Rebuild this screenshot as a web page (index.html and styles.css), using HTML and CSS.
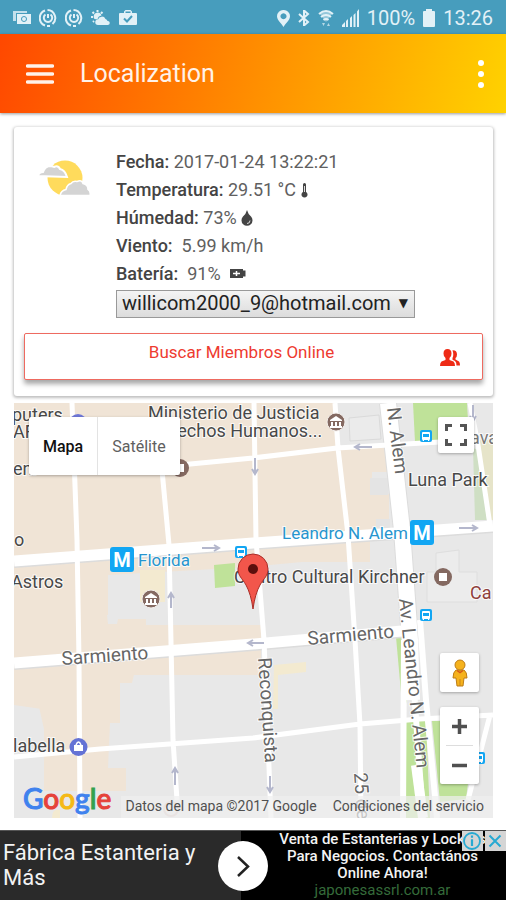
FILE: index.html
```html
<!DOCTYPE html>
<html lang="es">
<head>
<meta charset="utf-8">
<meta name="viewport" content="width=device-width, initial-scale=1">
<title>Localization</title>
<link rel="stylesheet" href="styles.css">
</head>
<body>
<div class="status">
  <div class="status-group">
    <svg width="18" height="16" viewBox="0 0 18 16"><path d="M0 1h14v2H3v8H0z" opacity=".8"/><path fill-rule="evenodd" d="M4 4h14v10H4zM11 6a3 3 0 1 0 .01 0z"/><circle cx="11" cy="9" r="2"/></svg>
    <svg width="18" height="18" viewBox="0 0 18 18"><g class="line"><path d="M6 1.500A8 8 0 0 0 6 16.500M8.500 1a8 8 0 0 1 5 14M8 17h3"/><path d="M6.500 5.500a4.200 4.200 0 1 0 5 0M9 5v4"/></g></svg>
    <svg width="18" height="18" viewBox="0 0 18 18"><g class="line"><path d="M6 1.500A8 8 0 0 0 6 16.500M8.500 1a8 8 0 0 1 5 14M8 17h3"/><path d="M6.500 5.500a4.200 4.200 0 1 0 5 0M9 5v4"/></g></svg>
    <svg width="20" height="16" viewBox="0 0 20 16"><g class="line"><path d="M6.500 0v2M1.500 2l1.500 1.500M11.500 2L10 3.500M0 7h2M2 12l1-1"/></g><path d="M3.500 9A4 4 0 1 1 10.500 5.500Q7 6 6.500 9.500zM7 15a2.700 2.700 0 0 1 0-5.500A4 4 0 0 1 14.500 9a3 3 0 0 1 2 2A2 2 0 0 1 17 15z"/></svg>
    <svg width="18" height="18" viewBox="0 0 18 18"><path d="M1 4h4V2.500L6.500 1h5L13 2.500V4h4q1 0 1 1v10q0 1-1 1H1q-1 0-1-1V5q0-1 1-1zM6.500 4h5V2.500h-5z" fill-rule="evenodd"/><path d="M5 9.500l3 3 5-5.500" fill="none" stroke="#479dbd" stroke-width="2"/></svg>
  </div>
  <div class="status-group">
    <svg width="13" height="17" viewBox="0 0 13 17"><path fill-rule="evenodd" d="M6.500 0A6.300 6.300 0 0 1 13 6.300C13 10 9 13 6.500 17 4 13 0 10 0 6.300A6.300 6.300 0 0 1 6.500 0zM6.500 3.300a3 3 0 1 0 .01 0z"/></svg>
    <svg width="12" height="16" viewBox="0 0 12 16"><path class="line" d="M1 4l9 8-4 3.500V.5L10 4l-9 8"/></svg>
    <svg width="16" height="18" viewBox="0 0 16 18"><g class="line"><path d="M1 5q7-6 14 0M3 8q5-4 10 0M5.500 11q2.500-2 5 0"/></g><path d="M8 13L2 5q6-4 12 0z" opacity=".5"/><path d="M4 14h3l-1.500 3zM9 17h3l-1.500-3z" opacity=".7"/></svg>
    <svg width="17" height="18" viewBox="0 0 17 18"><path d="M0 18v-2l3-3v5zM4 12l2-2v8H4zM8 9l2-2v11H8zM11.500 6l2-2v14h-2zM15 2.500L17 0v18h-2z"/></svg>
    <span>100%</span>
    <svg width="12" height="18" viewBox="0 0 12 18"><path d="M3 0h6v2h2q1 0 1 1v14q0 1-1 1H1q-1 0-1-1V3q0-1 1-1h2z"/></svg>
    <span>13:26</span>
  </div>
</div>

<header class="bar">
  <button class="menu" type="button" aria-label="Menú"><svg width="28" height="20" viewBox="0 0 28 20"><path d="M1.500 2h25M1.500 10h25M1.500 18h25" stroke="#fff2ea" stroke-width="3.400" stroke-linecap="round"/></svg></button>
  <h1>Localization</h1>
  <button type="button" aria-label="Opciones"><svg width="8" height="30" viewBox="0 0 8 30" fill="#fff"><circle cx="4" cy="4" r="3"/><circle cx="4" cy="15" r="3"/><circle cx="4" cy="26" r="3"/></svg></button>
</header>

<main>
  <section class="card">
    <div class="weather">
      <svg class="weather-icon" width="52" height="36" viewBox="0 0 52 36"><circle cx="27" cy="18" r="17.500" fill="#ffdb5c"/><path d="M0 16q1-4 5-4 2-6 8-6l3 1q4-2 6 2 5 1 7 8z" fill="#d4d4d4" stroke="#fff" stroke-width="2"/><path d="M22 35.500q1-5 6-6 1-5 5-6 2-3 6-2 5-2 6 2 5 1 5 6 3 2 2 6z" fill="#d4d4d4" stroke="#fff" stroke-width="1.500"/></svg>
      <div class="facts">
        <p><b>Fecha:</b> 2017-01-24 13:22:21</p>
        <p><b>Temperatura:</b> 29.51 °C <svg width="7" height="15" viewBox="0 0 7 15"><path d="M2 1.500a1.500 1.500 0 0 1 3 0V9a3 3 0 1 1-3 0z"/><path d="M3.500 3v6" stroke="#ddd"/></svg></p>
        <p><b>Húmedad:</b> 73% <svg width="12" height="16" viewBox="0 0 12 16"><path d="M6 0q1 4 4 6.500a5.500 5.500 0 1 1-8 0Q5 4 6 0z"/><path d="M6 13.500q3 0 3-3" stroke="#ddd" fill="none"/></svg></p>
        <p><b>Viento:</b>&nbsp; 5.99 km/h</p>
        <p><b>Batería:</b>&nbsp; 91% &nbsp;<svg class="battery" width="16" height="9" viewBox="0 0 16 9"><path d="M0 0h13v1.500h2.500v6H13V9H0z"/><path d="M3 4.500h7M6.500 2v5" stroke="#fff" stroke-width="1.500"/></svg></p>
        <div class="select-box">
          <select aria-label="Cuenta"><option>willicom2000_9@hotmail.com</option></select>
        </div>
      </div>
    </div>
    <button class="search" type="button"><span>Buscar Miembros Online</span>
      <svg width="20" height="17" viewBox="0 0 20 17" fill="#ee2b16"><path d="M3.500 4.500Q3.500 0 7.500 0t4 4.500Q11.500 8 9.500 9v2l4 1.500q1.500 1 1.500 4.500H0q0-3.500 1.500-4.500l4-1.500V9Q3.500 8 3.500 4.500zM12.500 1.200Q17 1 17 5.500q0 2.500-1.500 3.500v1.500l3.500 2q1 1 1 4h-3.500q0-3.500-1.500-4.500l-2.500-1.200V9Q14 6 12.500 1.200z"/></svg>
    </button>
  </section>

  <section class="map" aria-label="Mapa">
    <svg class="map-canvas" viewBox="14 403 479 415" preserveAspectRatio="xMidYMid slice">
      <rect x="14" y="403" width="479" height="415" fill="#e8e8e8"/>
      <g fill="#f0e4d6">
        <path d="M14 403H334l5 45h48v24h-15v22h17v27l-19 13v28h-68l-52 5-142 8v40h-1l1 9h9l1-5h28v6h115v50H134l-2 8h-12v40h-10l-2 45h18v23H44v-62l-7-31h15V718H42v-9L14 705z"/>
      </g>
      <path d="M370 478h18v17h-18zM376 519h14v14h-14z" fill="#e4e4e4"/>
      <path d="M349 418l30-3 2 24-31 2z" fill="#ebebeb" stroke="#dadada"/>
      <path d="M436 553l23-3v22h18v30h-50v-30h9z" fill="#ececec" stroke="#dedede"/>
      <path d="M140 570h25v32h-25zM274 665l32-3v10l-28 3v34h-5zM52 818q0-10 8-8v8z" fill="#f3ead0"/>
      <path d="M479 440h14v80h-5z" fill="#e6e4c9"/>
      <g fill="#bfe299">
        <path d="M413 403h54l2 36-54 3z"/><path d="M214 565l21-2v23l-20 2z"/>
        <path d="M396 637l5-1 6 64-4 15z"/><path d="M419 629l4-1 6 85-5-11z"/>
        <path d="M405 721h21l4 97h-26z"/><path d="M432 721h44l-10 78-26 3z"/>
        <path d="M473 448l5 2 9 70h-12z" fill="#cfdfc4"/>
      </g>
      <g class="road-edge">
        <path d="M14 562L253 544 493 527M14 664L253 645 402 632" stroke-width="12"/>
        <path d="M388 403L402 530 410 640" stroke-width="18"/>
      </g>
      <g class="road">
        <path d="M14 561L253 543 493 526M14 663L253 644 402 631" stroke-width="11"/>
        <path d="M388 403L402 530 410 640 412 700" stroke-width="16"/>
        <path d="M404 640L403 818M420 620L426 700 437 818M414 690L423 818" stroke-width="6"/>
        <path d="M416 765L423 818" stroke-width="10"/>
        <path d="M72 403L77 540 79 660 80 818M180 465L253 458 337 448 440 442M162 470L169 545 173 740 177 800M254 403L256 540 264 640 271 818M335 403L338 448 348 535 355 640 360 725 361 818M14 757L100 749 253 738 360 724 420 719 493 715M470 403L478 445 490 525M490 715L468 800" stroke-width="5"/>
      </g>
      <g class="arrow">
        <path d="M202 548h17m-5-3l5 3-5 3M459 528h18m-5-3l5 3-5 3M372 447h-17m5-3l-5 3 5 3M255 458v16m-3-5l3 5 3-5M171 608v-15m-3 5l3-5 3 5M264 643h-16m5-3l-5 3 5 3M175 785v-17m-3 5l3-5 3 5M270 776v16m-3-5l3 5 3-5M473 405v16m-3-5l3 5 3-5"/>
      </g>
      <g class="label">
        <text x="12" y="421">puters</text><text x="13" y="438">AR</text><text x="13" y="475">enl</text>
        <text x="148" y="419">Ministerio de Justicia</text><text x="150" y="437">Derechos Humanos...</text>
        <text x="14" y="546">o</text><text x="11" y="588">Astros</text><text x="13" y="752">labella</text>
        <text x="408" y="486">Luna Park</text><text x="234" y="583">Centro Cultural Kirchner</text>
        <text x="470" y="444" class="faint">ava</text>
        <text x="470" y="599" class="food">Ca</text>
      </g>
      <g class="label transit"><text x="138" y="566">Florida</text><text x="282" y="539">Leandro N. Alem</text></g>
      <g class="label street">
        <text transform="translate(62 665) rotate(-4)">Sarmiento</text>
        <text transform="translate(308 645) rotate(-5)">Sarmiento</text>
        <text transform="translate(258 658) rotate(86)">Reconquista</text>
        <text transform="translate(387 408) rotate(83)">N. Alem</text>
        <text transform="translate(399 599) rotate(84)">Av. Leandro N. Alem</text>
        <text transform="translate(354 773) rotate(86)">25 de</text>
      </g>
      <g id="metro"><rect x="110" y="547" width="24" height="25" rx="3" fill="#12a6f3"/><text x="122" y="567" class="metro">M</text></g>
      <use href="#metro" x="300" y="-27"/>
      <g id="bus"><rect x="235" y="546" width="12" height="12" rx="2" fill="#12a6f3"/><path fill="#fff" d="M238 548h6q1 0 1 1v6l-1 2h-1v-1h-4v1h-1l-1-2v-6q0-1 1-1zm0 2v3h6v-3z" fill-rule="evenodd"/></g>
      <use href="#bus" x="185" y="-116"/><use href="#bus" x="185" y="63"/><use href="#bus" x="238" y="206"/>
      <g id="museum"><circle cx="151" cy="599" r="9" fill="#846961" stroke="#f3eeea"/><path d="M145 597l6-4 6 4v1h-12zM146 599h2v4h-2zM150 599h2v4h-2zM154 599h2v4h-2zM145 603h12v2h-12z" fill="#fff"/></g>
      <use href="#museum" x="185" y="-177"/>
      <circle cx="180" cy="468" r="9" fill="#846961"/><path d="M176 464h8v8h-8z" fill="#fff"/>
      <circle cx="443" cy="577" r="9" fill="#846961"/><path d="M439 573h8v8h-8z" fill="#fff"/>
      <circle cx="78" cy="423" r="9" fill="#6f78d8"/>
      <circle cx="78.500" cy="747" r="9" fill="#6472d5"/><path d="M74 745h9v6h-9z" fill="#fff"/><path d="M76 745q2.500-6 5 0" fill="none" stroke="#fff" stroke-width="1.500"/><circle cx="171" cy="809" r="7" fill="none" stroke="#d9c6c2" stroke-width="2"/>
      <path d="M253 609q-2-15-7-24c-4-7-8-9-8-16a15 15 0 0 1 30 0c0 7-4 9-8 16q-5 9-7 24z" fill="#f2564b" stroke="#a92e28"/><circle cx="253" cy="569" r="5" fill="#5b0f0d"/>
    </svg>
    <div class="map-types"><button type="button" class="active">Mapa</button><button type="button">Satélite</button></div>
    <button class="map-button fullscreen" type="button" aria-label="Pantalla completa"><svg width="22" height="22" viewBox="0 0 22 22"><path d="M1.500 7V1.500H7M15 1.500h5.500V7M20.500 15v5.500H15M7 20.500H1.500V15" fill="none" stroke="#555" stroke-width="3"/></svg></button>
    <div class="map-side">
      <button class="map-button pegman" type="button" aria-label="Street View"><svg width="16" height="28" viewBox="0 0 16 28"><path d="M4 11q-3 2-3 8h3l1 8h6l1-8h3q0-6-3-8z" fill="#f5b21d" stroke="#bd7d17"/><circle cx="8" cy="6" r="5" fill="#f5b21d" stroke="#bd7d17"/><path d="M5 11.500l3 2 3-2" fill="none" stroke="#d4561a" stroke-width="1.500"/><path d="M8 20v7" stroke="#c9851b"/></svg></button>
      <div class="zoom">
        <button type="button" aria-label="Acercar"><svg width="15" height="15" viewBox="0 0 15 15"><path d="M0 7.500h15M7.500 0v15" stroke="#505050" stroke-width="3.500"/></svg></button>
        <button type="button" aria-label="Alejar"><svg width="15" height="15" viewBox="0 0 15 15"><path d="M0 7.500h15" stroke="#505050" stroke-width="3.500"/></svg></button>
      </div>
    </div>
    <div class="google" aria-label="Google"><span class="g-blue">G</span><span class="g-red">o</span><span class="g-yellow">o</span><span class="g-blue">g</span><span class="g-green">l</span><span class="g-red">e</span></div>
    <div class="credits"><span>Datos del mapa ©2017 Google</span><a href="#terms">Condiciones del servicio</a></div>
  </section>
</main>

<aside class="ad">
  <div class="ad-title">Fábrica Estanteria y Más</div>
  <div class="ad-copy"><p>Venta de Estanterias y Lockers</p><p>Para Negocios. Contactános</p><p>Online Ahora!</p><a href="#ad">japonesassrl.com.ar</a></div>
  <button class="ad-go" type="button" aria-label="Abrir anuncio"><svg width="50" height="50" viewBox="0 0 50 50"><path d="M20 16l10 9.500L20 35" fill="none" stroke="#222" stroke-width="2.500"/></svg></button>
  <div class="ad-tools">
    <button type="button" aria-label="Información"><svg width="20" height="20" viewBox="0 0 20 20"><circle cx="10" cy="10" r="8" fill="none" stroke="#27a9d2" stroke-width="1.800"/><path d="M10 4.500v2.300M10 8.300V15" stroke="#27a9d2" stroke-width="2.200"/></svg></button>
    <button type="button" aria-label="Cerrar"><svg width="20" height="20" viewBox="0 0 20 20"><path d="M4.500 4.500l11 11M15.500 4.500l-11 11" stroke="#27a9d2" stroke-width="2"/></svg></button>
  </div>
</aside>
</body>
</html>
```

FILE: styles.css
```css
* { box-sizing: border-box; }
body { margin: 0; min-height: 100vh; display: flex; flex-direction: column; background: #fff; color: #4a4a4a; font-family: Roboto, "Liberation Sans", sans-serif; }
button { font: inherit; color: inherit; border: 0; padding: 0; background: none; cursor: pointer; }
p, h1 { margin: 0; }
svg { display: block; flex: none; }

.status { height: 34px; padding: 2px 13px 0; display: flex; align-items: center; justify-content: space-between; background: #479dbd; color: #e2f1f7; font-size: 20px; }
.status svg { fill: #e2f1f7; }
.status .line { fill: none; stroke: #e2f1f7; stroke-width: 2; }
.status-group { display: flex; align-items: center; gap: 8px; }

.bar { height: 79px; padding: 0 21px 0 26px; display: flex; align-items: center; background: linear-gradient(105deg, #ff4800 0%, #ff8a00 48%, #ffd200 100%); box-shadow: 0 1px 3px rgba(0, 0, 0, .4); color: #fff2e8; }
.bar h1 { flex: 1; margin-left: 26px; font-size: 25px; font-weight: 400; line-height: 32px; }

main { padding: 14px 13px 12px 14px; display: flex; flex-direction: column; gap: 7px; }
.card { padding: 21px 10px 16px; border-radius: 3px; box-shadow: 0 1px 3px 1px rgba(0, 0, 0, .25); }
.weather { display: flex; }
.weather-icon { margin: 12px 26px 0 14px; }
.facts { font-size: 18px; line-height: 28px; color: #606060; }
.facts b { font-weight: 500; color: #444; }
.facts svg { display: inline-block; vertical-align: -2px; fill: #444; }
.facts .battery { vertical-align: 2px; }
.select-box { position: relative; display: inline-block; margin-top: 2px; line-height: 0; }
.select-box::after { content: "▼"; position: absolute; right: 7px; top: 13px; color: #222; font: 12px/0 "DejaVu Sans", sans-serif; pointer-events: none; }
select { appearance: none; height: 28px; padding: 0 23px 2px 5px; border: 1px solid #999; border-radius: 0; background: linear-gradient(#f4f4f4, #dcdcdc); color: #222; font: 20px Roboto, sans-serif; }
.search { width: 100%; min-height: 47px; margin-top: 15px; padding: 8px 22px 8px 18px; display: flex; align-items: flex-start; border: 1px solid #ee6a60; border-radius: 2px; background: #fff; box-shadow: 0 4px 5px rgba(0, 0, 0, .35); color: #ee3b30; font-size: 17px; line-height: 20px; }
.search span { flex: 1; }
.search svg { margin-top: 7px; }

.map { position: relative; aspect-ratio: 479 / 415; overflow: hidden; }
.map-canvas { width: 100%; height: 100%; }
.road { fill: none; stroke: #fff; }
.road-edge { fill: none; stroke: #dcdcdc; }
.arrow { fill: none; stroke: #b4b7cc; stroke-width: 2; }
.label { font: 18px Roboto, sans-serif; fill: #484848; stroke: #fff; stroke-opacity: .8; stroke-width: 2px; paint-order: stroke; }
.transit { font-size: 17px; fill: #2795cf; }
.street { font-size: 19px; fill: #666; }
.food { fill: #8f3f3b; }
.faint { fill: #777; }
.metro { font: 700 20px Roboto, sans-serif; fill: #fff; text-anchor: middle; }
.map-types { position: absolute; left: 15px; top: 14px; display: flex; height: 58px; border-radius: 2px; background: #fff; box-shadow: 0 1px 3px rgba(0, 0, 0, .3); color: #606060; font-size: 16px; }
.map-types button { padding: 0 14px; }
.map-types .active { border-right: 1px solid #e3e3e3; color: #111; font-weight: 500; }
.map-button, .zoom { display: grid; place-items: center; border-radius: 2px; background: #fff; box-shadow: 0 1px 3px rgba(0, 0, 0, .3); }
.fullscreen { position: absolute; right: 19px; top: 14px; width: 36px; height: 36px; }
.map-side { position: absolute; right: 14px; bottom: 34px; width: 39px; display: grid; gap: 15px; }
.pegman { height: 39px; }
.zoom button { width: 27px; height: 38px; display: grid; place-items: center; }
.zoom button + button { height: 39px; border-top: 1px solid #ddd; }
.google { position: absolute; left: 9px; bottom: 2px; font: 500 28px/36px Lato, sans-serif; -webkit-text-stroke: 1px; }
.g-blue { color: #3f82ee; }
.g-red { color: #e5423a; }
.g-yellow { color: #f5b916; }
.g-green { color: #30a250; }
.credits { position: absolute; right: 0; bottom: 0; height: 22px; padding: 0 9px 0 5px; display: flex; gap: 16px; background: rgba(240, 240, 240, .7); color: #505050; font-size: 14px; line-height: 20px; white-space: nowrap; }
.credits a { color: inherit; text-decoration: none; }

.ad { position: relative; flex: 1; min-height: 70px; display: grid; grid-template-columns: 241fr 265fr; border-top: 1px solid #555; background: #000; color: #f3f3f3; overflow: hidden; }
.ad-title { padding: 9px 36px 0 3px; background: #2a2a2a; font-size: 22px; line-height: 25px; }
.ad-copy { padding-left: 18px; text-align: center; font-size: 15px; font-weight: 500; line-height: 17px; white-space: nowrap; }
.ad-copy a { color: #356b3a; text-decoration: none; font-weight: 400; }
.ad-go { position: absolute; left: calc(48% - 25px); top: 10px; width: 50px; height: 50px; border-radius: 50%; background: #fff; }
.ad-tools { position: absolute; right: 0; top: 0; display: flex; gap: 2px; }
.ad-tools button { width: 21px; height: 20px; background: #d5d5d5; }
```
